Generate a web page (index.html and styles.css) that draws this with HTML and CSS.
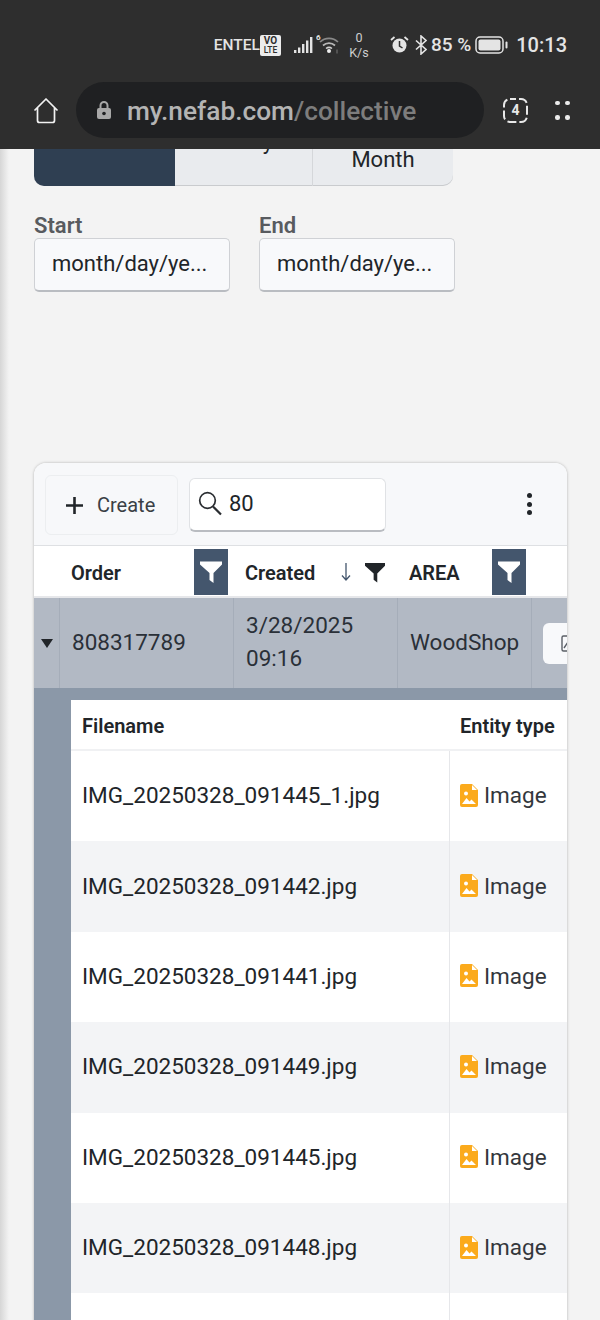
FILE: index.html
```html
<!DOCTYPE html>
<html lang="en">
<head>
<meta charset="utf-8">
<title>Collective</title>
<link rel="stylesheet" href="styles.css">
</head>
<body>
<header class="chrome">
  <div class="status">
    <span class="carrier">ENTEL</span>
    <span class="volte"><b>VO</b><b class="lte">LTE</b></span>
    <svg class="signal" width="19" height="17" viewBox="0 0 19 17"><g fill="#e4e4e4"><rect x="0" y="13" width="2.400" height="3"/><rect x="4" y="10.500" width="2.400" height="5.500"/><rect x="8" y="7" width="2.400" height="9"/><rect x="12" y="3.500" width="2.400" height="12.500"/><rect x="16" y="0" width="2.400" height="16"/></g></svg>
    <svg class="wifi" width="24" height="22" viewBox="0 0 24 22"><text x="0" y="7" class="wifi-six">6</text><g fill="none"><path d="M4 9 A13 13 0 0 1 22 9" stroke="#8a8a8a" stroke-width="1.700"/><path d="M7 12.500 A9 9 0 0 1 19 12.500" stroke="#b8b8b8" stroke-width="1.700"/><path d="M10 15.500 A5 5 0 0 1 16 15.500" stroke="#d0d0d0" stroke-width="1.500"/></g><circle cx="13" cy="18" r="2" fill="#eee"/><path d="M21 16.500v4" stroke="#777"/></svg>
    <span class="speed"><span>0</span><span>K/s</span></span>
    <svg class="alarm" width="19" height="19" viewBox="0 0 19 19"><circle cx="9.500" cy="10.500" r="7" fill="#e4e4e4"/><path d="M9.500 6v5l3 2" fill="none" stroke="#2e2e2e" stroke-width="1.500"/><path d="M1 5l3.500-3M18 5l-3.500-3" stroke="#e4e4e4" stroke-width="1.800"/></svg>
    <svg class="bt" width="12" height="20" viewBox="0 0 12 20"><path d="M1 5.500l10 9-5 4.500V1l5 4.500-10 9" fill="none" stroke="#e4e4e4" stroke-width="1.600"/></svg>
    <span class="pct">85 %</span>
    <svg class="battery" width="33" height="18" viewBox="0 0 33 18"><rect x="1" y="1" width="27" height="16" rx="4" fill="none" stroke="#e4e4e4" stroke-width="1.500"/><rect x="3.500" y="3.500" width="22" height="11" rx="2" fill="#e4e4e4"/><rect x="30.500" y="5.500" width="2" height="7" rx="1" fill="#e4e4e4"/></svg>
    <span class="time">10:13</span>
  </div>
  <div class="navbar">
    <svg class="home" width="26" height="27" viewBox="0 0 26 27"><path d="M1.500 13.500 13 2l11.500 11.500M4.500 11v12.500a2 2 0 0 0 2 2h13a2 2 0 0 0 2-2V11" fill="none" stroke="#f2f2f2" stroke-width="1.700" stroke-linejoin="round"/></svg>
    <div class="url">
      <svg class="lock" width="14" height="18" viewBox="0 0 14 18"><path d="M3.500 7V4.500a3.500 3.500 0 0 1 7 0V7" fill="none" stroke="#a8a8a8" stroke-width="2"/><rect x="0" y="7" width="14" height="11" rx="2" fill="#a8a8a8"/><circle cx="7" cy="12.500" r="1.800" fill="#1f2022"/></svg>
      <span class="url-text"><span class="host">my.nefab.com</span>/collective</span>
    </div>
    <div class="tabs"><svg width="25" height="25" viewBox="0 0 25 25"><rect x="1" y="1" width="23" height="23" rx="6" fill="none" stroke="#e8e8e8" stroke-width="2" stroke-dasharray="9 3" stroke-dashoffset="3"/></svg><span>4</span></div>
    <div class="dots"><i></i><i></i><i></i><i></i></div>
  </div>
</header>

<main class="page">
  <div class="segments">
    <div class="seg seg-active"></div>
    <div class="seg seg-mid"><span>Today</span></div>
    <div class="seg seg-last"><span>Month</span></div>
  </div>

  <div class="dates">
    <div class="field">
      <label class="field-label">Start</label>
      <div class="date-input">month/day/ye...</div>
    </div>
    <div class="field">
      <label class="field-label">End</label>
      <div class="date-input">month/day/ye...</div>
    </div>
  </div>

  <section class="card">
    <div class="toolbar">
      <button class="create"><svg width="17" height="17" viewBox="0 0 17 17"><path d="M8.500 0v17M0 8.500h17" stroke="#212529" stroke-width="2.600"/></svg><span>Create</span></button>
      <div class="search">
        <svg width="24" height="25" viewBox="0 0 24 25"><circle cx="9.500" cy="9.500" r="7.800" fill="none" stroke="#2a2d31" stroke-width="1.700"/><path d="M15 15.500l8 8" stroke="#2a2d31" stroke-width="2.200"/></svg>
        <span>80</span>
      </div>
      <div class="kebab"><i></i><i></i><i></i></div>
    </div>

    <div class="grid head">
      <div></div>
      <div class="hcell"><span>Order</span><span class="fbox"><svg width="22" height="22" viewBox="0 0 22 22"><path d="M0 .5h22v3L13.500 12v10l-4-3v-7L0 3.500z" fill="#fff"/></svg></span></div>
      <div class="hcell"><span>Created</span>
        <span class="sorts">
          <svg width="12" height="18" viewBox="0 0 12 18"><path d="M6 0v17M2 12.500l4 4.500 4-4.500" fill="none" stroke="#44566d" stroke-width="1.300"/></svg>
          <svg width="20" height="21" viewBox="0 0 22 22"><path d="M0 .5h22v3L13.500 12v10l-4-3v-7L0 3.500z" fill="#212529"/></svg>
        </span>
      </div>
      <div class="hcell"><span>AREA</span><span class="fbox"><svg width="22" height="22" viewBox="0 0 22 22"><path d="M0 .5h22v3L13.500 12v10l-4-3v-7L0 3.500z" fill="#fff"/></svg></span></div>
      <div></div>
    </div>

    <div class="grid master">
      <div class="mcell caret-cell"><span class="caret"></span></div>
      <div class="mcell">808317789</div>
      <div class="mcell created">3/28/2025<br>09:16</div>
      <div class="mcell">WoodShop</div>
      <div class="mcell last"><span class="row-btn"><svg width="10" height="17" viewBox="0 0 10 17"><path d="M9 1H2.500A1.500 1.500 0 0 0 1 2.500v12A1.500 1.500 0 0 0 2.500 16H9M3 13l6-9" fill="none" stroke="#5a5f66" stroke-width="1.400"/></svg></span></div>
    </div>

    <div class="detail">
      <div class="files">
        <div class="frow fhead"><div class="fname">Filename</div><div class="ftype">Entity type</div></div>
        <div class="frow"><div class="fname">IMG_20250328_091445_1.jpg</div><div class="ftype"><svg class="ficon" width="18" height="23" viewBox="0 0 18 23"><path d="M2 0h10l6 6v15a2 2 0 0 1-2 2H2a2 2 0 0 1-2-2V2a2 2 0 0 1 2-2z" fill="#fbaa1c"/><path d="M12 1l5 5h-5z" fill="#fff"/><path d="M2 20l4.500-6 3 3.500 2-2 4.500 4.500z" fill="#fff"/><circle cx="6" cy="9.500" r="2" fill="#fff"/></svg>Image</div></div>
        <div class="frow alt"><div class="fname">IMG_20250328_091442.jpg</div><div class="ftype"><svg class="ficon" width="18" height="23" viewBox="0 0 18 23"><path d="M2 0h10l6 6v15a2 2 0 0 1-2 2H2a2 2 0 0 1-2-2V2a2 2 0 0 1 2-2z" fill="#fbaa1c"/><path d="M12 1l5 5h-5z" fill="#fff"/><path d="M2 20l4.500-6 3 3.500 2-2 4.500 4.500z" fill="#fff"/><circle cx="6" cy="9.500" r="2" fill="#fff"/></svg>Image</div></div>
        <div class="frow"><div class="fname">IMG_20250328_091441.jpg</div><div class="ftype"><svg class="ficon" width="18" height="23" viewBox="0 0 18 23"><path d="M2 0h10l6 6v15a2 2 0 0 1-2 2H2a2 2 0 0 1-2-2V2a2 2 0 0 1 2-2z" fill="#fbaa1c"/><path d="M12 1l5 5h-5z" fill="#fff"/><path d="M2 20l4.500-6 3 3.500 2-2 4.500 4.500z" fill="#fff"/><circle cx="6" cy="9.500" r="2" fill="#fff"/></svg>Image</div></div>
        <div class="frow alt"><div class="fname">IMG_20250328_091449.jpg</div><div class="ftype"><svg class="ficon" width="18" height="23" viewBox="0 0 18 23"><path d="M2 0h10l6 6v15a2 2 0 0 1-2 2H2a2 2 0 0 1-2-2V2a2 2 0 0 1 2-2z" fill="#fbaa1c"/><path d="M12 1l5 5h-5z" fill="#fff"/><path d="M2 20l4.500-6 3 3.500 2-2 4.500 4.500z" fill="#fff"/><circle cx="6" cy="9.500" r="2" fill="#fff"/></svg>Image</div></div>
        <div class="frow"><div class="fname">IMG_20250328_091445.jpg</div><div class="ftype"><svg class="ficon" width="18" height="23" viewBox="0 0 18 23"><path d="M2 0h10l6 6v15a2 2 0 0 1-2 2H2a2 2 0 0 1-2-2V2a2 2 0 0 1 2-2z" fill="#fbaa1c"/><path d="M12 1l5 5h-5z" fill="#fff"/><path d="M2 20l4.500-6 3 3.500 2-2 4.500 4.500z" fill="#fff"/><circle cx="6" cy="9.500" r="2" fill="#fff"/></svg>Image</div></div>
        <div class="frow alt"><div class="fname">IMG_20250328_091448.jpg</div><div class="ftype"><svg class="ficon" width="18" height="23" viewBox="0 0 18 23"><path d="M2 0h10l6 6v15a2 2 0 0 1-2 2H2a2 2 0 0 1-2-2V2a2 2 0 0 1 2-2z" fill="#fbaa1c"/><path d="M12 1l5 5h-5z" fill="#fff"/><path d="M2 20l4.500-6 3 3.500 2-2 4.500 4.500z" fill="#fff"/><circle cx="6" cy="9.500" r="2" fill="#fff"/></svg>Image</div></div>
        <div class="frow"><div class="fname"></div><div class="ftype"></div></div>
      </div>
    </div>
  </section>
</main>
</body>
</html>
```
FILE: styles.css
```css
* { box-sizing: border-box; }
html, body { margin: 0; height: 1320px; overflow: hidden; }
body {
  width: 600px;
  background: #f3f3f3;
  font-family: Roboto, "Liberation Sans", sans-serif;
  color: #212529;
}

/* Browser chrome */
.chrome { height: 149px; background: #2e2e2e; color: #e4e4e4; }
.status {
  height: 82px;
  padding: 33px 33px 0 0;
  display: flex;
  justify-content: flex-end;
  align-items: flex-start;
}
.carrier { font-size: 15.500px; font-weight: 500; line-height: 24px; }
.volte {
  width: 21px; height: 21px; margin-top: 2px;
  background: #ececec; color: #2e2e2e;
  border-radius: 2px;
  display: flex; flex-direction: column; align-items: center;
  font-size: 10px; line-height: 10px;
  padding-top: 1px;
}
.volte .lte { font-size: 8.500px; line-height: 9px; font-weight: 500; }
.signal { margin: 4px 0 0 13px; }
.wifi { margin: 0 0 0 3px; }
.wifi-six { font: 700 8px Roboto, sans-serif; fill: #e4e4e4; }
.speed {
  width: 26px; margin: -3px 0 0 6px;
  display: flex; flex-direction: column; align-items: center;
  font-size: 12.500px; line-height: 15px;
  color: #cfcfcf;
}
.alarm { margin: 2px 0 0 18px; }
.bt { margin: 2px 0 0 6px; }
.pct { font-size: 19px; font-weight: 500; line-height: 24px; margin-left: 4px; }
.battery { margin: 3px 0 0 4px; }
.time { font-size: 20px; font-weight: 500; line-height: 24px; margin-left: 8px; }

.navbar { display: flex; align-items: center; height: 56px; padding-left: 33px; }
.home { flex: none; }
.url {
  width: 408px; height: 56px; margin-left: 17px;
  background: #1f2022;
  border-radius: 28px;
  display: flex; align-items: center;
  padding-left: 21px;
}
.url-text { margin: 2px 0 0 16px; font-size: 26.250px; font-weight: 500; color: #7d7d7d; }
.host { color: #b4b4b4; }
.tabs {
  width: 25px; height: 25px; margin-left: 19px;
  display: grid; place-items: center;
  font-size: 14px; font-weight: 700; color: #e8e8e8;
}
.tabs > * { grid-area: 1 / 1; }
.dots {
  width: 14px; margin-left: 27px;
  display: grid; grid-template-columns: 4px 4px; justify-content: space-between; row-gap: 10px;
}
.dots i { width: 4.500px; height: 4.500px; border-radius: 50%; background: #ececec; }

/* Page */
.page {
  height: 1171px;
  padding-left: 34px;
  background: linear-gradient(90deg, #d6d6d6 0, #f3f3f3 9px);
}
.segments {
  width: 419px; height: 37px;
  display: flex; overflow: hidden;
  border-radius: 0 0 10px 10px;
  background: #e9ebee;
  box-shadow: inset 0 -1px 0 #c9cbce;
  font-size: 22px;
}
.seg { display: flex; justify-content: center; align-items: flex-end; }
.seg-active { width: 141px; background: #2f3f52; }
.seg-mid { width: 138px; padding-bottom: 32px; border-right: 1px solid #d5d7da; }
.seg-last { width: 140px; padding-bottom: 16px; line-height: 20px; }
.seg-mid span { line-height: 24px; }

.dates { display: flex; gap: 29px; margin-top: 27px; }
.field { width: 196px; }
.field-label { display: block; font-size: 22px; font-weight: 600; color: #585b5f; line-height: 25px; }
.date-input {
  height: 54px;
  background: #f8f9fb;
  border: 1px solid #cfd1d5;
  border-bottom: 2px solid #b9bcc1;
  border-radius: 5px;
  padding: 0 0 0 17px;
  font-size: 22px;
  line-height: 50px;
  white-space: nowrap;
}

/* Card */
.card {
  width: 533px;
  margin-top: 171px;
  height: 900px;
  background: #fff;
  border-radius: 12px 12px 0 0;
  overflow: hidden;
  box-shadow: 0 0 3px rgba(0, 0, 0, .28);
}
.toolbar {
  height: 83px;
  background: #f7f8fa;
  border-bottom: 1px solid #dee0e3;
  display: flex; align-items: flex-start;
  padding: 12px 0 0 11px;
}
.create {
  width: 133px; height: 60px;
  background: #f7f8fa;
  border: 1px solid #eceef0;
  border-radius: 6px;
  display: flex; align-items: center; gap: 14px;
  padding: 0 0 0 20px;
  font: 400 20px Roboto, sans-serif;
  color: #3a3f45;
}
.search {
  width: 197px; height: 54px;
  margin: 3px 0 0 11px;
  background: #fff;
  border: 1px solid #e0e2e5;
  border-bottom: 2px solid #b9bcc1;
  border-radius: 6px;
  display: flex; align-items: center; gap: 7px;
  padding: 0 0 2px 8px;
  font-size: 22px;
}
.kebab {
  margin: 18px 0 0 141px;
  display: flex; flex-direction: column; gap: 3.500px;
}
.kebab i { width: 5px; height: 5px; border-radius: 50%; background: #212529; }

.grid { display: grid; grid-template-columns: 26px 174px 164px 134px 35px; }
.head { height: 52px; background: #fff; border-bottom: 2px solid #e6e7ea; }
.hcell {
  display: flex; align-items: center; justify-content: space-between;
  padding: 4px 6px 0 11px;
  font-size: 20px; font-weight: 600;
}
.fbox {
  width: 34px; height: 46px; margin-top: -3px;
  background: #44566d;
  display: flex; align-items: center; justify-content: center;
}
.sorts { display: flex; align-items: center; gap: 13px; margin-right: 7px; margin-top: -2px; }

.master { height: 90px; background: #b2b9c4; }
.mcell {
  display: flex; align-items: center;
  padding: 0 0 2px 12px;
  border-right: 1px solid #a5adb9;
  font-size: 22.500px; color: #2a3038;
  line-height: 33px;
}
.caret-cell { padding: 0; justify-content: center; }
.caret { width: 0; height: 0; border: 6.500px solid transparent; border-top: 9px solid #212529; border-bottom: 0; }
.last { border-right: 0; overflow: hidden; padding: 0 0 0 11px; }
.row-btn {
  flex: none; width: 40px; height: 41px;
  background: #f8f9fb;
  border-radius: 6px;
  display: flex; align-items: center;
  padding-left: 18px;
}

.detail { background: #8b98a8; padding: 12px 0 0 37px; height: 700px; }
.files { background: #fff; }
.frow { display: grid; grid-template-columns: 378px 118px; height: 90.400px; font-size: 22.500px; }
.frow.alt { background: #f3f4f6; }
.fname { padding: 0 0 2px 11px; display: flex; align-items: center; white-space: nowrap; }
.ftype { padding: 0 0 2px 10px; display: flex; align-items: center; gap: 6px; white-space: nowrap; color: #33373c; border-left: 1px solid #e6e7ea; }
.fhead { height: 51px; border-bottom: 2px solid #f0f1f3; font-size: 20px; font-weight: 600; }
.fhead .ftype { color: #212529; border-left: 0; padding-left: 11px; }
.fhead .fname, .fhead .ftype { padding: 2px 0 0 11px; }
```
